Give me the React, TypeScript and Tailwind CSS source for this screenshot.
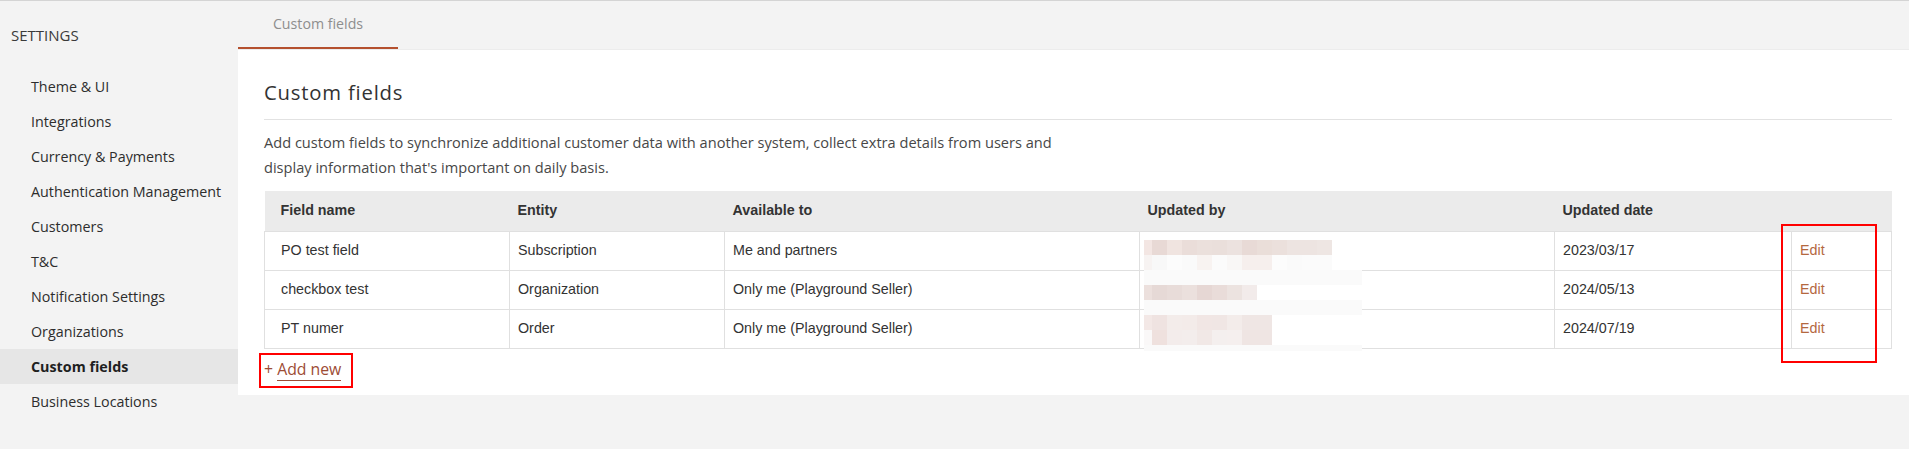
import React from 'react';

const navItems = [
  'Theme & UI',
  'Integrations',
  'Currency & Payments',
  'Authentication Management',
  'Customers',
  'T&C',
  'Notification Settings',
  'Organizations',
  'Custom fields',
  'Business Locations',
];

const rows = [
  { name: 'PO test field', entity: 'Subscription', available: 'Me and partners', date: '2023/03/17' },
  { name: 'checkbox test', entity: 'Organization', available: 'Only me (Playground Seller)', date: '2024/05/13' },
  { name: 'PT numer', entity: 'Order', available: 'Only me (Playground Seller)', date: '2024/07/19' },
];

// pixelated redaction over the "Updated by" column, one entry per 15px strip
const mosaic: { h: number; cells: string[] }[] = [
  { h: 15, cells: ['#f3e6e3', '#e8d9d5', '#f0e4e0', '#eaddd9', '#ebe0dc', '#eadfdb', '#ece2df', '#e8dad6', '#eaded9', '#ebe0dc', '#ede4e1', '#ede4e1', '#eee6e3'] },
  { h: 15, cells: ['#f7f3f2', '#f8f8f8', '#fcfcfc', '#fafafa', '#f8f3f1', '#fbfbfb', '#f9f7f6', '#f6efed', '#f6efed', '#fcfcfc', '#fafafa', '#fbfbfb', '#fbfbfb'] },
  { h: 15, cells: Array(15).fill('#fafafa') },
  { h: 15, cells: ['#ece0dd', '#e6d9d6', '#e8dcd9', '#ebe0dd', '#e6d7d4', '#e9dcd9', '#ece3e0', '#f2ebea'] },
  { h: 15, cells: Array(15).fill('#fafafa') },
  { h: 15, cells: ['#f3e8e6', '#efe3e1', '#f3ecea', '#f3ebe9', '#f1e6e4', '#f0e6e4', '#f3ecea', '#efe6e4', '#efe6e4'] },
  { h: 15, cells: ['#faf8f8', '#efe1de', '#f3eceb', '#f3edec', '#f1e8e6', '#f4efee', '#f5efee', '#efe5e3', '#efe5e3'] },
  { h: 6, cells: Array(15).fill('#fafafa') },
];

function Redaction() {
  return (
    <div className="absolute left-[1144px] top-[239px] flex flex-col">
      {mosaic.map((strip, i) => (
        <div key={i} className="flex">
          {strip.cells.map((c, j) => (
            <div
              key={j}
              style={{ backgroundColor: c, height: strip.h, width: j === 0 ? 8 : 15 }}
            />
          ))}
        </div>
      ))}
    </div>
  );
}

export default function App() {
  return (
    <div className="relative min-h-[449px] bg-[#f3f3f3] border-t border-[#d4d4d4] flex font-['Open_Sans',sans-serif]">
      <aside className="w-[238px] shrink-0 pt-[24px]">
        <div className="pl-[11px] h-[20px] leading-[20px] text-[15px] text-[#3a3a3a]">SETTINGS</div>
        <ul className="mt-[24px]">
          {navItems.map((item) => {
            const active = item === 'Custom fields';
            return (
              <li
                key={item}
                className={
                  'h-[35px] leading-[35px] pl-[31px] text-[14.3px] ' +
                  (active ? 'bg-[#e6e6e6] font-bold text-[#1f1f1f]' : 'text-[#2d2d2d]')
                }
              >
                {item}
              </li>
            );
          })}
        </ul>
      </aside>

      <main className="flex-1 flex flex-col">
        <div className="h-[48px] flex">
          <div className="w-[160px] border-b-2 border-[#b4502e] flex items-center justify-center text-[14.2px] text-[#8e8e8e]">
            Custom fields
          </div>
        </div>

        <section className="bg-white border-t border-[#ececec] h-[346px] pl-[26px] pr-[18px] pt-[28px]">
          <h1 className="text-[20.3px] leading-[28px] tracking-[0.8px] text-[#333]">Custom fields</h1>
          <div className="mt-[13px] border-t border-[#e2e2e2]" />
          <p className="mt-[10px] max-w-[800px] text-[14.6px] leading-[25px] text-[#474747]">
            Add custom fields to synchronize additional customer data with another system, collect extra details from users and display information that's important on daily basis.
          </p>

          <table className="mt-[11px] w-full table-fixed border-collapse font-['Liberation_Sans',Arial,sans-serif] text-[14.3px] text-[#333]">
            <colgroup>
              <col className="w-[245px]" />
              <col className="w-[215px]" />
              <col className="w-[415px]" />
              <col className="w-[415px]" />
              <col className="w-[237px]" />
              <col className="w-[100px]" />
            </colgroup>
            <thead>
              <tr className="bg-[#ebebeb] h-[40px] text-left">
                <th className="pl-[16px] font-bold">Field name</th>
                <th className="pl-[8px] font-bold">Entity</th>
                <th className="pl-[8px] font-bold">Available to</th>
                <th className="pl-[8px] font-bold">Updated by</th>
                <th className="pl-[8px] font-bold">Updated date</th>
                <th />
              </tr>
            </thead>
            <tbody>
              {rows.map((r) => (
                <tr key={r.name} className="h-[39px]">
                  <td className="border border-[#e0e0e0] pl-[16px]">{r.name}</td>
                  <td className="border border-[#e0e0e0] pl-[8px]">{r.entity}</td>
                  <td className="border border-[#e0e0e0] pl-[8px]">{r.available}</td>
                  <td className="border border-[#e0e0e0] pl-[8px]" />
                  <td className="border border-[#e0e0e0] pl-[8px]">{r.date}</td>
                  <td className="border border-[#e0e0e0] pl-[8px]">
                    <a className="text-[#b4683f] cursor-pointer">Edit</a>
                  </td>
                </tr>
              ))}
            </tbody>
          </table>

          <div className="mt-[8px] text-[15.8px] leading-[24px] text-[#9d4c35]">
            + <span className="border-b border-[#9d4c35] cursor-pointer">Add new</span>
          </div>
        </section>
      </main>

      <Redaction />
      {/* annotation boxes from the screenshot */}
      <div className="absolute left-[259px] top-[352px] w-[94px] h-[35px] border-2 border-[#ff0000]" />
      <div className="absolute left-[1781px] top-[223px] w-[96px] h-[139px] border-2 border-[#ff0000]" />
    </div>
  );
}
